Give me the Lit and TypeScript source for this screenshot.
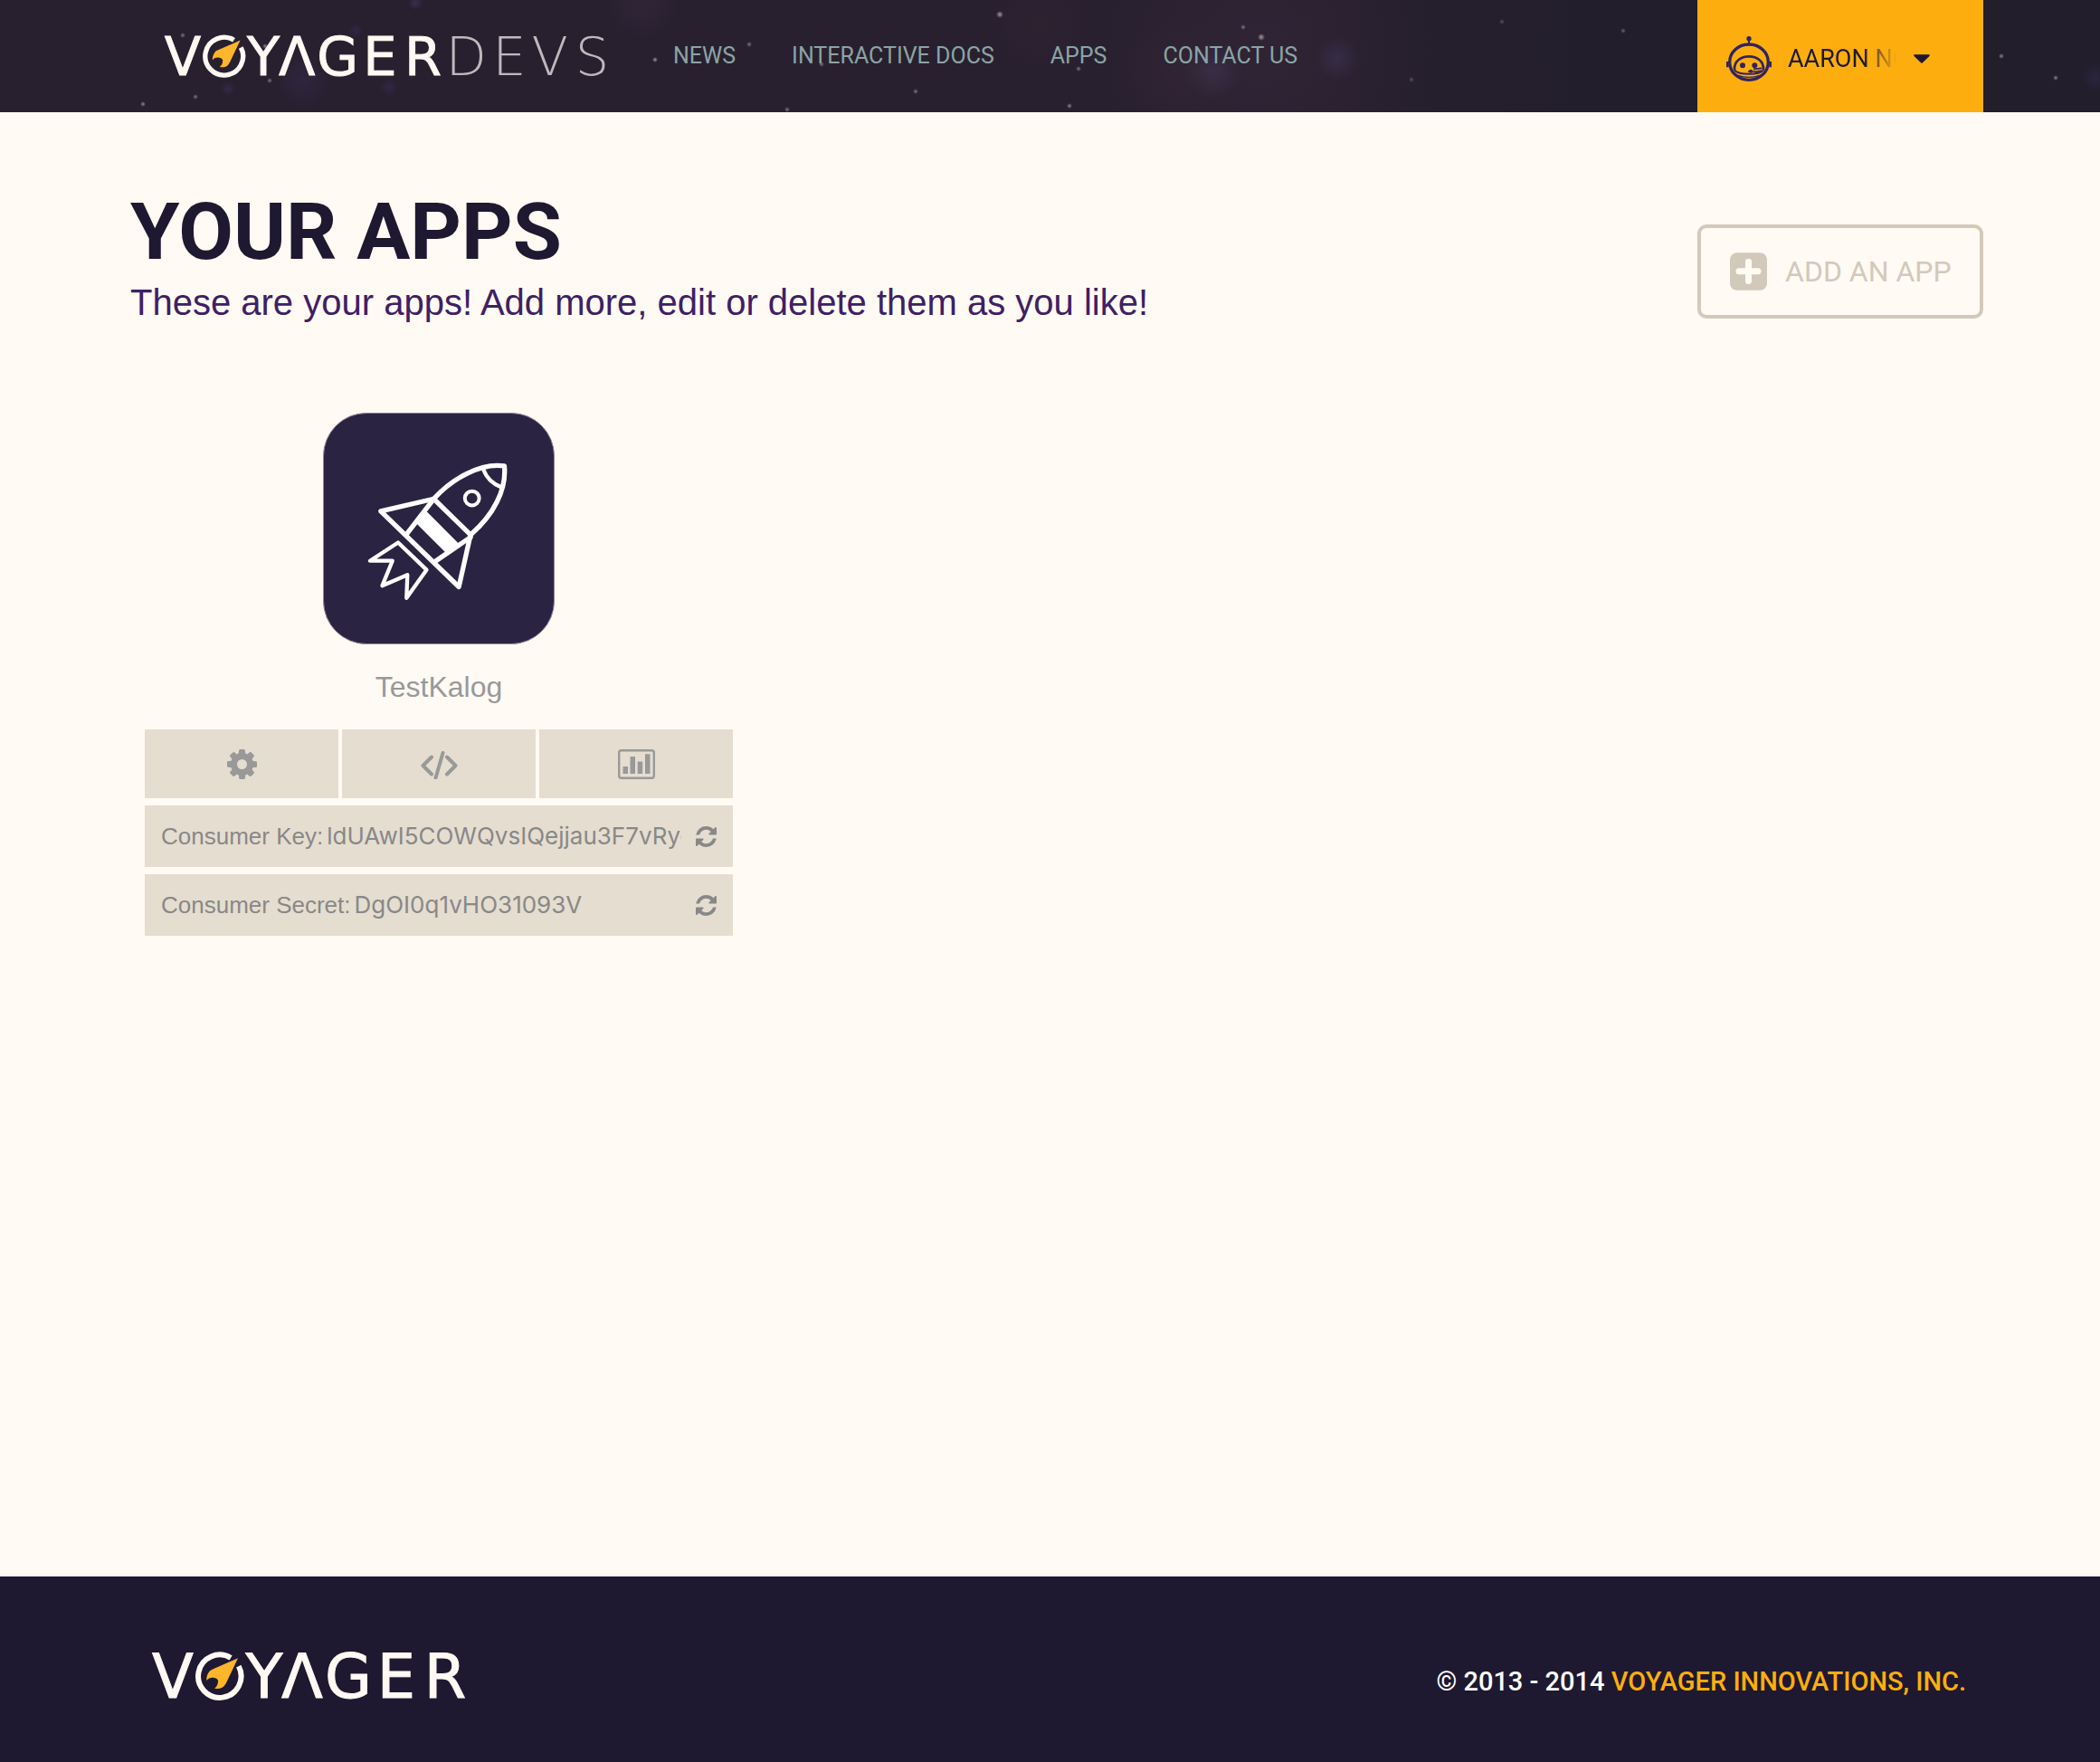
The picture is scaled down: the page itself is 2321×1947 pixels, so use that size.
import { LitElement, html, css, svg, unsafeCSS } from "lit";
import { customElement, property } from "lit/decorators.js";

/* Star field of the header: x, y, radius, opacity. */
const STARS: [number, number, number, number][] = [
  [202, 39, 2, 0.5], [293, 51, 2, 0.6], [298, 89, 2, 0.5], [158, 115, 2, 0.6],
  [216, 107, 2, 0.5], [724, 66, 2, 0.7], [1105, 16, 3, 0.7], [828, 49, 2, 0.5],
  [908, 71, 2, 0.5], [1374, 30, 2, 0.5], [1394, 41, 3, 0.7], [1192, 76, 2, 0.5],
  [1012, 101, 2, 0.5], [1182, 117, 2, 0.6], [870, 121, 2, 0.5], [1794, 34, 2, 0.4],
  [2212, 62, 2, 0.6], [2272, 86, 2, 0.6], [1560, 88, 2, 0.3], [1660, 24, 2, 0.3],
];

/* Nebula glows: x, y, radius, colour. */
const GLOWS: [number, number, number, string][] = [
  [1342, 78, 32, "80, 74, 110, 0.3"], [1478, 65, 24, "80, 74, 120, 0.3"],
  [1400, 60, 190, "70, 46, 70, 0.25"], [1300, 80, 60, "84, 48, 62, 0.15"],
  [335, 88, 32, "66, 54, 110, 0.25"], [252, 98, 8, "66, 54, 120, 0.4"],
  [393, 34, 8, "66, 54, 120, 0.3"], [459, 3, 8, "80, 70, 130, 0.4"],
  [710, 4, 40, "66, 50, 80, 0.25"], [1150, 25, 60, "70, 40, 56, 0.2"],
  [2316, 86, 16, "50, 50, 96, 0.35"], [430, 96, 10, "66, 54, 120, 0.3"],
];

const SPACE = [
  ...STARS.map(([x, y, r, a]) =>
    `radial-gradient(circle at ${x}px ${y}px, rgba(214, 204, 206, ${a}) 0, transparent ${r + 1}px)`),
  ...GLOWS.map(([x, y, r, c]) =>
    `radial-gradient(circle at ${x}px ${y}px, rgba(${c}) 0, transparent ${r}px)`),
].join(", ");

@customElement("voyager-logo")
export class VoyagerLogo extends LitElement {
  @property({ type: Boolean }) devs = false;

  static styles = css`
    :host { display: block; }
    svg { display: block; width: 346px; height: 54px; overflow: visible; }
    svg.wide { width: 494px; height: 48px; }
    .bold { font: 400 67px "DejaVu Sans", sans-serif; fill: #fff9f3; stroke: #fff9f3; stroke-width: 1; text-anchor: middle; }
    .thin { font: 200 67px "DejaVu Sans Light", "DejaVu Sans", sans-serif; fill: #bdb9bd; text-anchor: middle; }
  `;

  render() {
    return html`<svg class=${this.devs ? "wide" : ""} viewBox=${this.devs ? "0 0 560 54" : "0 0 346 54"}
      role="img" aria-label=${this.devs ? "Voyager Devs" : "Voyager"}>
      <text class="bold" y="51" x="25 126 168 219 272 326">VYΛGER</text>
      <g transform="translate(76.700 27)">
        <path d="M12.400 -20.100A23.700 23.700 0 1 0 21.100 -10.800" fill="none" stroke="#fff9f3" stroke-width="6"/>
        <path d="M20.300 -19.700L-3 -9.500C-9 -7 -11 -6 -12 -4C-14 -1 -14.500 1 -14.500 5C-12 2 -9 1.500 -6 2C-2 2.500 -1 5 -2 8C-2.500 11 -4 12 -5.500 13.700C-1 14.500 3 13.500 5 11C7 9 8 6 9 4Z" fill="#fdb52b"/>
      </g>
      ${this.devs ? svg`<text class="thin" y="51" x="380 434 485 538">DEVS</text>` : ""}
    </svg>`;
  }
}

const gear = html`<svg class="gear" viewBox="0 128 1536 1536" aria-hidden="true"><path d="M1024 896q0-106-75-181t-181-75-181 75-75 181 75 181 181 75 181-75 75-181zm512-109v222q0 12-8 23t-20 13l-185 28q-19 54-39 91 35 50 107 138 10 12 10 25t-9 23q-27 37-99 108t-94 71q-12 0-26-9l-138-108q-44 23-91 38-16 136-29 186-7 28-36 28h-222q-14 0-24.500-8.500t-11.500-21.500l-28-184q-49-16-90-37l-141 107q-10 9-25 9-14 0-25-11-126-114-165-168-7-10-7-23 0-12 8-23 15-21 51-66.500t54-70.500q-27-50-41-99l-183-27q-13-2-21-12.500t-8-23.500v-222q0-12 8-23t19-13l186-28q14-46 39-92-40-57-107-138-10-12-10-24 0-10 9-23 26-36 98.500-107.500t94.500-71.500q13 0 26 10l138 107q44-23 91-38 16-136 29-186 7-28 36-28h222q14 0 24.500 8.500t11.500 21.500l28 184q49 16 90 37l142-107q9-9 24-9 13 0 25 10 129 119 165 170 7 8 7 22 0 12-8 23-15 21-51 66.500t-54 70.500q26 50 41 98l183 28q13 2 21 12.500t8 23.500z" fill="currentColor"/></svg>`;

const code = html`<svg class="glyph" viewBox="0 0 41 33" aria-hidden="true"><g fill="none" stroke="currentColor" stroke-width="4" stroke-linecap="round" stroke-linejoin="round"><path d="M12 8.500L2.500 18L12 27.500M29 8.500L38.500 18L29 27.500M24.500 4L16.500 31.500"/></g></svg>`;

const chart = html`<svg class="glyph" viewBox="0 0 41 33" aria-hidden="true"><rect x="1.200" y="1.200" width="38.600" height="30.600" rx="2.500" fill="none" stroke="currentColor" stroke-width="2.400"/><path d="M5.500 19h5.500v8h-5.500zM13.500 8h5.500v19h-5.500zM21.700 13.500h5.500v13.500h-5.500zM30 5.300h5.500v21.700h-5.500z" fill="currentColor"/></svg>`;

const refresh = html`<svg class="refresh" viewBox="0 0 1536 1536" aria-hidden="true"><path d="M1511 928q0 5-1 7-64 268-268 434.500t-478 166.500q-146 0-282.500-55t-243.500-157l-129 129q-19 19-45 19t-45-19-19-45v-448q0-26 19-45t45-19h448q26 0 45 19t19 45-19 45l-137 137q71 66 161 102t187 36q134 0 250-65t186-179q11-17 53-117 8-23 30-23h192q13 0 22.500 9.500t9.500 22.500zm25-800v448q0 26-19 45t-45 19h-448q-26 0-45-19t-19-45 19-45l138-138q-148-137-349-137-134 0-250 65t-186 179q-11 17-53 117-8 23-30 23h-199q-13 0-22.500-9.500t-9.500-22.500v-7q65-268 270-434.500t480-166.500q146 0 284 55.500t245 156.500l130-129q19-19 45-19t45 19 19 45z" fill="currentColor"/></svg>`;

const plus = html`<svg class="plus" viewBox="0 0 123 125" aria-hidden="true"><rect width="123" height="125" rx="23" fill="currentColor"/><path d="M61.500 30v64M30 62h63" stroke="#fffaf3" stroke-width="21" stroke-linecap="round"/></svg>`;

const astronaut = html`<svg class="avatar" viewBox="204 120 150 150" aria-hidden="true">
  <g fill="none" stroke="#33235f">
    <ellipse cx="279" cy="206" rx="64" ry="59" stroke-width="10"/>
    <path d="M279 130V146" stroke-width="6"/>
    <path d="M208 204V223M350 204V223" stroke-width="8"/>
    <path d="M231 232C229 202 254 187 279 187S329 202 327 232" stroke-width="8"/>
    <path d="M231 232C245 250 313 250 327 232" stroke-width="6"/>
    <path d="M244 250C262 258 296 258 314 250" stroke-width="4"/>
    <path d="M276 237H300M294 229L322 226M298 239L320 234" stroke-width="5"/>
  </g>
  <g fill="#33235f"><circle cx="279" cy="128" r="8"/><circle cx="258" cy="217" r="9"/><circle cx="298" cy="217" r="9"/><circle cx="285" cy="236" r="6"/></g>
</svg>`;

const rocket = html`<svg class="rocket" viewBox="60 47 762 768" role="img" aria-label="TestKalog icon">
  <g fill="none" stroke="#fff" stroke-width="16" stroke-linejoin="round" stroke-linecap="round">
    <path d="M424 332C485 265 580 210 660 222C668 300 625 385 547 452Z"/>
    <path d="M590 234C600 262 620 282 650 293" stroke-width="13"/>
    <circle cx="552" cy="330" r="24" stroke-width="12"/>
    <path d="M424 332L247 373L508 626L547 452"/>
    <path d="M420 338L333 450M547 460L427 542"/>
    <path d="M305 478L400 569L333 663L336 586L252 622L286 539L211 539Z" stroke-width="13"/>
  </g>
  <path d="M396 370L510 484L468 516L362 410Z" fill="#fff"/>
</svg>`;

@customElement("app-root")
export class AppRoot extends LitElement {
  static styles = css`
    :host {
      display: flex; flex-direction: column; min-height: 100vh;
      background: #fffaf3; color: #1e1931;
      font-family: Roboto, sans-serif;
    }
    * { box-sizing: border-box; margin: 0; }
    svg { display: block; flex: none; }
    a { color: inherit; text-decoration: none; }
    button { border: 0; padding: 0; background: none; color: inherit; font: inherit; cursor: pointer; }

    header {
      display: flex; align-items: center; height: 124px;
      padding: 0 129px 0 180px;
      background: ${unsafeCSS(SPACE)}, linear-gradient(90deg, #28202f 0, #28202f 60%, #231e2c 75%, #231e2c 100%);
    }
    nav { display: flex; gap: 62px; margin-left: 70px; font-size: 25px; line-height: 32px; color: #8ba4a5; }
    .user {
      display: flex; align-items: center; width: 316px; height: 124px;
      margin-left: auto; padding: 6px 32px 0; background: #fdae0e;
    }
    .avatar { width: 50px; height: 50px; }
    .who {
      width: 120px; margin-left: 18px; overflow: hidden; white-space: nowrap; text-align: left;
      font-size: 27px; line-height: 32px;
      mask-image: linear-gradient(90deg, #000 84px, transparent 120px);
    }
    .caret { width: 18px; height: 10px; margin-left: 19px; }

    main { flex: 1; padding: 88px 129px 88px 144px; }
    .head { display: flex; justify-content: space-between; align-items: flex-start; }
    h1 { font-size: 88px; line-height: 88px; font-weight: 700; }
    .lead { margin-top: 10px; font: 40px/48px "Liberation Sans", Arial, sans-serif; color: #3e2066; }
    .add {
      display: flex; align-items: center; gap: 20px; width: 316px; height: 104px; margin-top: 36px;
      padding: 0 32px; border: 4px solid #d2c9bb; border-radius: 10px;
      color: #d2c9bb; font-size: 32px; line-height: 40px; white-space: nowrap;
    }
    .plus { width: 41px; height: 42px; }

    .apps { display: grid; grid-template-columns: repeat(3, minmax(0, 650px)); gap: 32px; padding: 98px 0 0 16px; list-style: none; }
    .app { display: flex; flex-direction: column; font-family: "Liberation Sans", Arial, sans-serif; }
    .tile {
      align-self: center; width: 256px; height: 256px; overflow: hidden;
      border: 1px solid #8d879a; border-radius: 48px; background: #2a2442;
    }
    .rocket { width: 100%; height: 100%; }
    h2 { margin: 27px 0; font-size: 32px; line-height: 40px; font-weight: 400; text-align: center; color: #999; }
    .actions { display: grid; grid-template-columns: repeat(3, 1fr); gap: 4px; }
    .actions button { display: flex; align-items: center; justify-content: center; height: 76px; background: #e5ddd0; color: #999; }
    .gear { width: 33px; height: 33px; }
    .glyph { width: 41px; height: 33px; }
    .key { display: flex; align-items: center; height: 68px; margin-top: 8px; padding: 0 18px; background: #e5ddd0; color: #888; font-size: 26px; line-height: 32px; }
    .key label { white-space: nowrap; }
    .key input {
      flex: 1; min-width: 0; height: 36px; margin: 0 16px 0 4px; padding: 0;
      border: 0; outline: 0; background: none; color: inherit;
      font: 26px/36px Inter, sans-serif;
    }
    .refresh { width: 23px; height: 23px; }

    footer {
      display: flex; align-items: flex-end; justify-content: space-between;
      padding: 83px 148px 68px 166px; background: #1e1931;
      color: #fff; font-size: 29px; line-height: 42px; font-weight: 500;
    }
    footer a { color: #fdae0e; }
  `;

  private credential(id: string, label: string, value: string) {
    return html`<div class="key">
      <label for=${id}>${label}</label>
      <input id=${id} type="text" readonly .value=${value}>
      <button type="button" aria-label="Refresh">${refresh}</button>
    </div>`;
  }

  render() {
    return html`
      <header>
        <a href="#" aria-label="Voyager Devs"><voyager-logo devs></voyager-logo></a>
        <nav>
          ${["NEWS", "INTERACTIVE DOCS", "APPS", "CONTACT US"].map((t) => html`<a href="#">${t}</a>`)}
        </nav>
        <button class="user" type="button">
          ${astronaut}
          <span class="who">AARON NG</span>
          <svg class="caret" viewBox="0 0 18 10" aria-hidden="true"><path d="M1.200 1.200H16.800L9 8.800Z" fill="#1e1931" stroke="#1e1931" stroke-width="2" stroke-linejoin="round"/></svg>
        </button>
      </header>
      <main>
        <div class="head">
          <div>
            <h1>YOUR APPS</h1>
            <p class="lead">These are your apps! Add more, edit or delete them as you like!</p>
          </div>
          <button class="add" type="button">${plus}<span>ADD AN APP</span></button>
        </div>
        <ul class="apps">
          <li class="app">
            <div class="tile">${rocket}</div>
            <h2>TestKalog</h2>
            <div class="actions">
              <button type="button" aria-label="Settings">${gear}</button>
              <button type="button" aria-label="Code">${code}</button>
              <button type="button" aria-label="Statistics">${chart}</button>
            </div>
            ${this.credential("key", "Consumer Key:", "ldUAwI5COWQvsIQejjau3F7vRyc")}
            ${this.credential("secret", "Consumer Secret:", "DgOI0q1vHO31093V")}
          </li>
        </ul>
      </main>
      <footer>
        <voyager-logo></voyager-logo>
        <p>© 2013 - 2014 <a href="#">VOYAGER INNOVATIONS, INC.</a></p>
      </footer>
    `;
  }
}
